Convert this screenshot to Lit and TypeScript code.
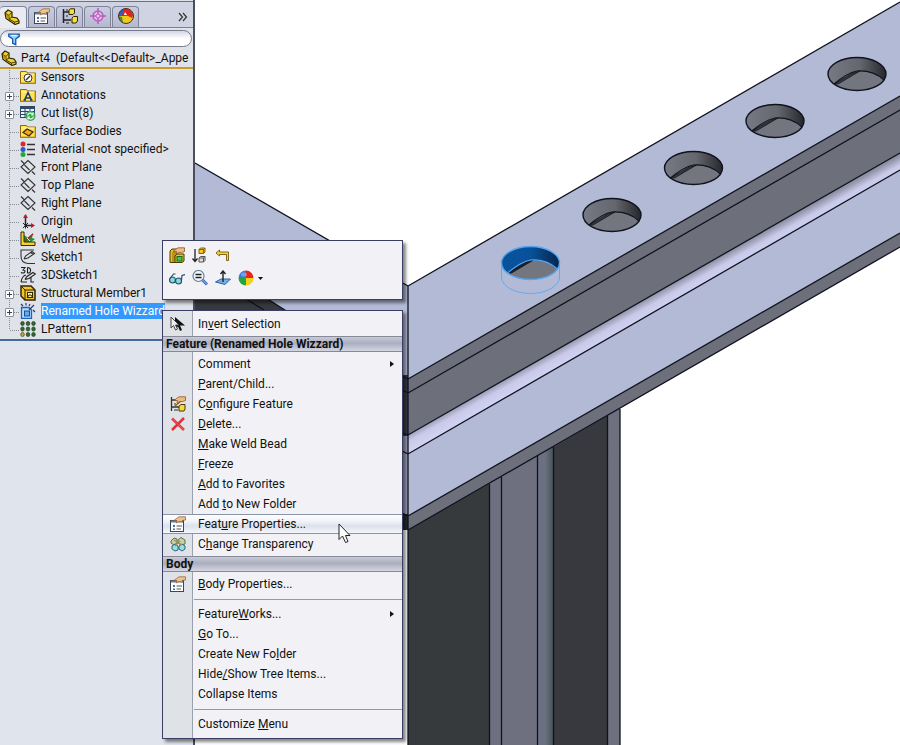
import { LitElement, html, svg, css, nothing } from "lit";
import { customElement, property } from "lit/decorators.js";
import { classMap } from "lit/directives/class-map.js";

const part = svg`<path d="M1 4 4 1 8 3V8L13 9 15 12V14L11 15.500 2 9.500Z" fill="#f0d32c" stroke="#2d2505" stroke-width="1.200"/><path d="M1 4 5 6.500V10L10.500 13 15 12M5 6.500 8 3M10.500 13V15M5 10 8 8" fill="none" stroke="#4a3d08"/><path d="M2 5 4.500 6.500V10L2 8.500Z" fill="#b89310"/>`;
const card = svg`<rect x=".5" y="4.500" width="13" height="11" fill="#fff" stroke="#3d4658"/><path d="M1 5.500h12" stroke="#6b7d9c" stroke-width="2"/><path d="M3 9h2v2H3zM3 12.500h2v1.500H3z" fill="#3f6fb4"/><path d="M6.500 10H12M6.500 13H11" stroke="#555"/><path d="M4 4.500 6.500 2.500 9 .8H15.500V4L12 4.500 13 6 9 5.500 6 7 7 4.500Z" fill="#eec48c" stroke="#8a5f2e" stroke-width=".7"/>`;
const hand = svg`<path d="M4 4.500 6.500 2.500 9 .8H15.500V4.500L12.500 5.500 10 5.500 7 7 7.500 4.500Z" fill="#eebd84" stroke="#8a5426" stroke-width=".8"/>`;
const folder = svg`<path d="M.5 2.500H6L8 4H15.500V14.500H.5Z" fill="#ffe353" stroke="#8b6a0c"/><path d="M1.500 5H14.500" stroke="#fff7b5"/><path d="M15 5V14H1" fill="none" stroke="#c49a18"/>`;
const ball = svg`<path d="M8 8V.5A7.500 7.500 0 0 0 .5 8Z" fill="#3978e0"/><path d="M8 8V.5A7.500 7.500 0 0 1 15.500 8Z" fill="#e0281e"/><path d="M8 8H.5A7.500 7.500 0 0 0 8 15.500Z" fill="#26a53a"/><path d="M8 8H15.500A7.500 7.500 0 0 1 8 15.500Z" fill="#f7cf1d"/><ellipse cx="6" cy="4.500" rx="3" ry="2" fill="#fff" opacity=".3"/>`;

const ICONS: Record<string, unknown> = {
  part,
  card,
  config: svg`<path d="M1.500 1V15M1.500 4H8M1.500 12H9" fill="none" stroke="#222" stroke-width="1.500"/><path d="M4 2H6M4 8H6M4 15H7" stroke="#222"/><path d="M7 2 8.500 .8H12.500V5L11 6.500H7Z" fill="#f7df35" stroke="#2b2708"/><path d="M10 10 11.500 8.500H15.500V13L14 15H10Z" fill="#f7df35" stroke="#2b2708"/>`,
  target: svg`<circle cx="8" cy="8" r="5" fill="#e7b9e8" stroke="#b95fbe" stroke-width="1.500"/><path d="M8 0V16M0 8H16" stroke="#b95fbe" stroke-width="1.500"/><circle cx="8" cy="8" r="2" fill="#efc9ef" stroke="#b95fbe"/>`,
  render: svg`<circle cx="8" cy="8" r="7.500" fill="#f4ca18"/><path d="M8 8 .5 8A7.500 7.500 0 0 1 8 .5Z" fill="#2a62c8"/><path d="M4 7 6 1A7.500 7.500 0 0 1 15 7L14 10 10 8Z" fill="#e3241b"/><path d="M.5 8 4 9 5 14.500A7.500 7.500 0 0 1 .5 8Z" fill="#2a9e38"/><path d="M6 7 7 4 9 7Z" fill="#fff"/><circle cx="8" cy="8" r="7.500" fill="none" stroke="#442b2b"/>`,
  funnel: svg`<path d="M2 2.500H14V5L10 8V14.500L6.500 13V8L2 5Z" fill="#8ed4fa" stroke="#1557b0" stroke-width="1.500"/><path d="M5 4H11" stroke="#e5f8ff" stroke-width="1.500"/>`,
  sensors: svg`${folder}<circle cx="8" cy="9" r="4" fill="#fff" stroke="#333"/><path d="M6 11 10 7" stroke="#333" stroke-width="1.500"/>`,
  annotations: svg`${folder}<path d="M4.500 13 8 5.500 11.500 13M6 11H10.500M3.500 13H6M10 13H12.500" fill="none" stroke="#16366f" stroke-width="1.500"/>`,
  cutlist: svg`<rect x=".5" y="1.500" width="14" height="11" fill="#e9f2fb" stroke="#31465e"/><path d="M.5 3H14.500" stroke="#2a4d78" stroke-width="2"/><path d="M1 6.500H14M1 9.500H10M5 2V12M10 2V12" stroke="#31465e"/><circle cx="10.500" cy="11" r="5" fill="#35a852"/><path d="M7.500 10.500A3 3 0 0 1 13 9.500M13.500 11.500A3 3 0 0 1 8 12.500M13 7.500V10H11M8 14.500V12H10" fill="none" stroke="#eaffea" stroke-width="1.200"/>`,
  surface: svg`${folder}<path d="M3 9.500 7 6 13 9 9 13Z" fill="#f2a71e" stroke="#3b2b05" stroke-width="1.200"/>`,
  material: svg`<circle cx="3" cy="3" r="2.500" fill="#d92b24"/><circle cx="3" cy="8.500" r="2.500" fill="#2859d6"/><circle cx="3" cy="13.500" r="2.500" fill="#25a934"/><path d="M7 3.500H15M7 8.500H15M7 13.500H15" stroke="#333" stroke-width="1.500"/>`,
  plane: svg`<path d="M8 1.500 15 8 8 14.500 1 8ZM1 1.500 4 4.500M4.500 6 9.500 11M12 12.500 15 15.500" fill="none" stroke="#333" stroke-width="1.100"/>`,
  origin: svg`<path d="M5.500 2V12.500H13" fill="none" stroke="#4b1518" stroke-width="1.500"/><path d="M3 5 5.500 1 8 5ZM11 10 15 12.500 11 15Z" fill="#b22028"/><path d="M3 10 8 15M8 10 3 15M5.500 9V15.500" stroke="#222"/>`,
  weldment: svg`<path d="M4 11V4L8 7 13 2 12 7 15 8 11 11Z" fill="#218f3d"/><path d="M1 1H4V11H15V14.500H1Z" fill="#f2d22e" stroke="#332b08"/><path d="M5 10 13 3" stroke="#b3261e" stroke-width="1.500"/><path d="M7 7 10 10" stroke="#dff2b9"/>`,
  sketch: svg`<path d="M14 1H1V7Q1 14 8 14.500H15M4 10 5.500 7 12 2.500 14.500 4.500 8 9 4 10M11 3.500 13 5.500" fill="none" stroke="#333" stroke-width="1.100"/>`,
  sketch3d: svg`<path d="M1 .5H5L3 3Q6 3.500 4.500 5.500 3 6.500 1 5.500M7.500 .5V6H8.500Q11 5.500 10.500 2.500 10 .5 7.500 .5M1 15Q2 9 6 8M5 12.500 7 9.500 13 5.500 15.500 7 9 11.500 5 12.500M1 15H7M11 10V15H14" fill="none" stroke="#222" stroke-width="1.100"/>`,
  member: svg`<path d="M1 1H11L15 5V15H5L1 11Z" fill="#f2c62a" stroke="#302608" stroke-width="1.500"/><path d="M1 1 5 5H15M5 5V15" fill="none" stroke="#302608"/><rect x="7.500" y="7.500" width="5" height="5" fill="#fff3aa" stroke="#302608"/><path d="M7 13 9 10H11L13 13" fill="none" stroke="#302608"/>`,
  hole: svg`<path d="M1.500 4.500H9L11.500 7V15.500H1.500Z" fill="#b7dcfa" stroke="#1d63bb" stroke-width="1.300"/><rect x="4.500" y="8" width="5" height="5" fill="#67a9ee" stroke="#164c98"/><path d="M9 7 14 2M1 1 3 3M6 0V2.500M9 3 10 1M13 7 15 9" stroke="#203d79" stroke-width="1.200"/>`,
  pattern: svg`${[2.5, 8, 13.500].map((x) => [2.500, 8, 13.500].map((y) => svg`<ellipse cx=${x} cy=${y} rx="1.800" ry="2.100" fill=${x < 3 && y > 13 ? "#e59b22" : "#2f6b30"} stroke="#15300f" stroke-width=".6"/>`))}`,
  edit: svg`<path d="M1 4 3 2H8V15.500H1Z" fill="#edbd20" stroke="#4d3905"/><path d="M4 5V15M6 5V15" stroke="#87680a"/><path d="M6 9 8 7H15V14L13 15.500H6Z" fill="#e6c425" stroke="#4d3905"/><rect x="8" y="9.500" width="5" height="4.500" fill="#45c651" stroke="#146724"/>${hand}`,
  suppress: svg`<path d="M3 2V14M.5 11.500 3 14.500 5.500 11.500" fill="none" stroke="#222" stroke-width="1.300"/><path d="M7 2.500 8.500 1H13V5L11.500 6.500H7ZM7 2.500H11.500V6.500M11.500 2.500 13 1" fill="#f4c72f" stroke="#8a5c0c"/><path d="M7 11 8.500 9.500H13V13.500L11.500 15H7ZM7 11H11.500V15M11.500 11 13 9.500" fill="#ddd" stroke="#555"/>`,
  rollback: svg`<path d="M1 6 4.500 3V5H13.500V13.500H11.500V7.500H4.500V9Z" fill="#f7d637" stroke="#76590b" stroke-width=".9"/>`,
  glasses: svg`<circle cx="3.500" cy="10" r="3" fill="#8bd5e7" stroke="#235463" stroke-width="1.200"/><circle cx="9.500" cy="11" r="3" fill="#8bd5e7" stroke="#235463" stroke-width="1.200"/><path d="M1 8.500 4.500 4H6.500M12.500 10 13 5.500 16 4.500M6 9.500H7" fill="none" stroke="#235463" stroke-width="1.200"/>`,
  zoom: svg`<circle cx="6.500" cy="6" r="5.500" fill="#f2f6fb" stroke="#6a7f9b" stroke-width="1.200"/><path d="M3.500 4.500H9.500M3.500 7.500H9.500" stroke="#222" stroke-width="1.500"/><path d="M10.500 10 15 14.500" stroke="#3568bd" stroke-width="3"/><path d="M10.500 10 15 14.500" stroke="#9fc6f2"/>`,
  normal: svg`<path d="M.5 12 6 9H15.500L10 14.500Z" fill="#77aee6" stroke="#2764a8"/><path d="M8 12V1M5.500 4 8 1 10.500 4" fill="none" stroke="#222" stroke-width="1.400"/>`,
  ball,
  pointer: svg`<path d="M5 1V13L8 10.500 10 15 12 14 10 9.500H15Z" fill="#111"/><path d="M1 1V12L3.500 9.500 5.500 14 7.500 13 5.500 9H9Z" fill="#eee" stroke="#444"/>`,
  configure: svg`<path d="M1.500 1V15M1.500 4H6M1.500 11H9" fill="none" stroke="#333" stroke-width="1.300"/><path d="M4 14H8M4 8H6" stroke="#333"/><path d="M9 10 11 8.500H15V13L14 15H9Z" fill="#f4dc38" stroke="#4d3905"/><path d="M5 10 11 5" stroke="#9e5a1c" stroke-width="1.500"/>${hand}`,
  remove: svg`<path d="M2 2.500 14 14M14 2 2 14" stroke="#e0313b" stroke-width="2.500"/><path d="M2 2.500 14 14" stroke="#f0676a" stroke-width=".7"/>`,
  transparency: svg`<path d="M1 5 4 2 7 3V7L4 9 1 7ZM8 4 11 1.500 15 4V8L11 9 8 7Z" fill="#c3d3a0" stroke="#64704c"/><path d="M2 10 5 8 8 10V14L5 15 2 13ZM9 10 12 8 15 10V13L12 15 9 13Z" fill="#99dfe8" stroke="#2b6775"/><path d="M4 4 12 9M10 5 5 10" stroke="#a98a5b" stroke-width="1.300"/>`,
};

function icon(name: string) {
  return html`<svg class="icon" viewBox="0 0 16 16" aria-hidden="true">${ICONS[name]}</svg>`;
}

const iconStyles = css`
  .icon { display: block; flex: none; width: 16px; height: 16px; }
`;

@customElement("feature-tree")
class FeatureTree extends LitElement {
  static styles = [iconStyles, css`
    :host { display: block; }
    .bar { display: flex; align-items: flex-end; gap: 1px; height: 24px; padding-top: 3px; background: linear-gradient(#dde0e8 0 1px, #6d7083 1px 2px, #d0d4e2 2px); border-bottom: 1px solid #7c8095; }
    .tab { display: flex; align-items: center; justify-content: center; width: 27px; height: 21px; padding: 0 0 2px; border: 1px solid #80849a; border-bottom: 0; border-radius: 4px 4px 0 0; background: linear-gradient(#c9cde0, #b5b9cf); }
    .active { height: 22px; margin-bottom: -1px; padding-right: 3px; border-left: 0; background: #e9ebf1; }
    .more { margin-left: auto; height: 20px; padding: 0 5px; border: 0; background: none; color: #333; }
    .chevrons { display: block; width: 10px; height: 10px; }
    .filter { display: flex; align-items: center; gap: 4px; height: 15px; margin: 2px 1px 2px 0; padding: 0 6px; border: 1px solid #777b8c; border-radius: 9px; background: linear-gradient(#d4d7e6, #fff 50%); }
    .filter .icon { width: 14px; height: 14px; }
    .query { flex: 1; min-width: 0; height: 15px; padding: 0; border: 0; outline: 0; background: none; font: inherit; }
    .root { display: flex; align-items: center; gap: 4px; height: 18px; white-space: pre; border-bottom: 2px solid #c99c2d; padding-left: 1px; }
    .tree { margin: -1px 0 0; padding: 0 0 1px; list-style: none; }
    .row { display: flex; align-items: center; height: 18px; background: repeating-linear-gradient(#85899a 0 1px, transparent 1px 2px) 9px 0 / 1px 100% no-repeat, repeating-linear-gradient(90deg, #85899a 0 1px, transparent 1px 2px) 10px 10px / 9px 1px no-repeat; }
    .row:last-child { background-size: 1px 50%, 9px 1px; }
    .twist { width: 20px; flex: none; }
    .expand { display: block; width: 9px; height: 9px; margin: 2px 0 0 5px; padding: 0; border: 1px solid #8b8f9c; border-radius: 1px; background: linear-gradient(#34415e, #34415e) center / 5px 1px no-repeat, linear-gradient(#34415e, #34415e) center / 1px 5px no-repeat, #fff; }
    .label { margin-left: 5px; line-height: 16px; white-space: nowrap; }
    .selected { background: #3399ff; color: #fff; }
  `];

  private rows: [string, string, boolean?, boolean?][] = [
    ["sensors", "Sensors"],
    ["annotations", "Annotations", true],
    ["cutlist", "Cut list(8)", true],
    ["surface", "Surface Bodies"],
    ["material", "Material <not specified>"],
    ["plane", "Front Plane"],
    ["plane", "Top Plane"],
    ["plane", "Right Plane"],
    ["origin", "Origin"],
    ["weldment", "Weldment"],
    ["sketch", "Sketch1"],
    ["sketch3d", "3DSketch1"],
    ["member", "Structural Member1", true],
    ["hole", "Renamed Hole Wizzard", true, true],
    ["pattern", "LPattern1"],
  ];

  render() {
    const tabs = [["part", "Feature tree"], ["card", "Properties"], ["config", "Configurations"], ["target", "Dimensions"], ["render", "Display"]];
    return html`
      <nav class="bar">
        ${tabs.map(([name, label], i) => html`<button class=${classMap({ tab: true, active: i === 0 })} aria-label=${label}>${icon(name)}</button>`)}
        <button class="more" aria-label="More tabs"><svg class="chevrons" viewBox="0 0 10 10"><path d="M1 1 4.500 5 1 9M5 1 8.500 5 5 9" fill="none" stroke="#333" stroke-width="1.200"/></svg></button>
      </nav>
      <label class="filter">${icon("funnel")}<input class="query" type="text" aria-label="Filter" /></label>
      <div class="root">${icon("part")}<span>Part4  (Default&lt;&lt;Default&gt;_Appe</span></div>
      <ul class="tree">
        ${this.rows.map(([name, label, expandable, selected]) => html`
          <li class="row">
            <span class="twist">${expandable ? html`<button class="expand" aria-label="Expand ${label}"></button>` : nothing}</span>
            ${icon(name)}<span class=${classMap({ label: true, selected: !!selected })}>${label}</span>
          </li>`)}
      </ul>`;
  }
}

type Entry = { kind: "item" | "head" | "rule"; text?: string; icon?: string; sub?: boolean; hot?: boolean };

const item = (text: string, iconName?: string, extra: Partial<Entry> = {}): Entry => ({ kind: "item", text, icon: iconName, ...extra });

/* An underscore stands before the access key of each label. */
const MENU: Entry[] = [
  item("In_vert Selection", "pointer"),
  { kind: "head", text: "Feature (Renamed Hole Wizzard)" },
  item("Comment", undefined, { sub: true }),
  item("_Parent/Child..."),
  item("C_onfigure Feature", "configure"),
  item("_Delete...", "remove"),
  item("_Make Weld Bead"),
  item("_Freeze"),
  item("_Add to Favorites"),
  item("Add _to New Folder"),
  item("Feat_ure Properties...", "card", { hot: true }),
  item("C_hange Transparency", "transparency"),
  { kind: "head", text: "Body" },
  item("_Body Properties...", "card"),
  { kind: "rule" },
  item("Feature_Works...", undefined, { sub: true }),
  item("_Go To..."),
  item("Create New Fo_lder"),
  item("Hide_/Show Tree Items..."),
  item("Collapse Items"),
  { kind: "rule" },
  item("Customize _Menu"),
];

@customElement("context-menu")
class ContextMenu extends LitElement {
  static styles = [iconStyles, css`
    :host { display: block; box-sizing: border-box; width: 241px; padding: 3px 0 4px; border: 1px solid #3b3d62; background: linear-gradient(90deg, #dfe3e7 0 29px, #9ba1ac 29px 30px, #f1f1f6 30px); box-shadow: 3px 3px 3px #0007; }
    .item { display: flex; align-items: center; width: 100%; height: 20px; padding: 0 8px 0 7px; border: 0; background: none; font: inherit; color: #111; text-align: left; }
    .hot { background: linear-gradient(#8c94aa 0 1px, transparent 1px 19px, #8c94aa 19px), linear-gradient(#fff, #f2f4fa 35%, #dce1ec 60%, #f8f9fc); }
    .slot { width: 16px; flex: none; }
    .text { flex: 1; margin-left: 12px; white-space: nowrap; }
    .key { text-decoration: underline; }
    .arrow { width: 4px; height: 6px; }
    .head { box-sizing: border-box; height: 16px; margin: 2px 0; padding-left: 3px; border: solid #858998; border-width: 1px 0; background: linear-gradient(#c9cbd6, #aaaebf 45%, #d4d6e0); font-weight: 700; line-height: 14px; white-space: nowrap; }
    .rule { height: 1px; margin: 5px 0 4px 31px; border: 0; background: #9499a7; }
  `];

  private entry(e: Entry) {
    if (e.kind === "head") return html`<div class="head">${e.text}</div>`;
    if (e.kind === "rule") return html`<hr class="rule" />`;
    const [before, after] = e.text!.split("_");
    const label = after === undefined ? before : html`${before}<span class="key">${after[0]}</span>${after.slice(1)}`;
    return html`<button role="menuitem" class=${classMap({ item: true, hot: !!e.hot })}><span class="slot">${e.icon ? icon(e.icon) : nothing}</span><span class="text">${label}</span>${e.sub ? html`<svg class="arrow" viewBox="0 0 4 6"><path d="M0 0 4 3 0 6Z" fill="#111"/></svg>` : nothing}</button>`;
  }

  render() {
    return html`<div role="menu">${MENU.map((e) => this.entry(e))}</div>`;
  }
}

@customElement("quick-bar")
class QuickBar extends LitElement {
  static styles = [iconStyles, css`
    :host { display: flex; flex-direction: column; gap: 3px; box-sizing: border-box; width: 241px; height: 60px; padding: 4px; border: 1px solid #3b3d62; background: #f1f1f6; box-shadow: 3px 3px 3px #0007; }
    .line { display: flex; gap: 3px; }
    .tool { display: flex; align-items: center; justify-content: center; min-width: 20px; height: 20px; padding: 0 2px; border: 0; background: none; }
    .drop { display: block; width: 5px; height: 3px; margin-left: 4px; }
  `];

  render() {
    const lines = [
      [["edit", "Edit feature"], ["suppress", "Suppress"], ["rollback", "Rollback"]],
      [["glasses", "Hide"], ["zoom", "Zoom to selection"], ["normal", "Normal to"], ["ball", "Appearance"]],
    ];
    return lines.map((line) => html`<div class="line">${line.map(([name, label]) => html`
      <button class="tool" aria-label=${label}>${icon(name)}${name === "ball" ? html`<svg class="drop" viewBox="0 0 5 3"><path d="M0 0H5L2.500 3Z" fill="#111"/></svg>` : nothing}</button>`)}</div>`);
  }
}

@customElement("model-view")
class ModelView extends LitElement {
  static styles = css`
    :host { display: block; overflow: hidden; background: #fff; }
    .scene { display: block; width: 100%; height: 100%; }
    .edge { fill: none; stroke: #10131f; stroke-width: 1.300; }
  `;

  private hole(x: number, y: number, picked = false) {
    const rim = picked ? "#55a5ef" : "#10131f";
    return svg`<g transform="translate(${x} ${y})">
      <ellipse rx="29" ry="16.500" fill=${picked ? "url(#bluewall)" : "url(#wall)"}/>
      <path d="M-23 10 0 -3Q16 -4 27 6 20 16.500 0 16.500 -15 16.500 -23 10Z" fill="#74767f"/>
      <path d="M-23 10 -4 -1 3 -3 -19 10Z" fill=${picked ? "#1b1e28" : "#363942"} stroke="#14161d" stroke-width=".8"/>
      <path d="M-23 10Q-10 -1 0 -3 16 -4 27 6" fill="none" stroke=${rim} stroke-width="1.200"/>
      <ellipse rx="29" ry="16.500" fill="none" stroke=${rim} stroke-width="1.400"/>
      ${picked ? svg`<path d="M-29 0V14A29 16.500 0 0 0 29 14V0" fill="none" stroke="#64aaf0"/>` : nothing}
    </g>`;
  }

  render() {
    return html`<svg class="scene" viewBox="195 0 705 745" preserveAspectRatio="xMinYMin slice" role="img" aria-label="Welded frame with a row of holes">
      <defs>
        <linearGradient id="wall"><stop offset="0" stop-color="#777984"/><stop offset=".55" stop-color="#65676e"/><stop offset="1" stop-color="#25272c"/></linearGradient>
        <linearGradient id="bluewall"><stop offset="0" stop-color="#08539d"/><stop offset=".5" stop-color="#08519a"/><stop offset="1" stop-color="#05254b"/></linearGradient>
        <linearGradient id="round" gradientUnits="userSpaceOnUse" x1="654" y1="294" x2="663" y2="310"><stop offset="0" stop-color="#8f91a6"/><stop offset=".45" stop-color="#c9cae9"/><stop offset="1" stop-color="#d3d4f3"/></linearGradient>
        <linearGradient id="flute"><stop offset="0" stop-color="#6e7084"/><stop offset=".45" stop-color="#69717e"/><stop offset="1" stop-color="#465057"/></linearGradient>
      </defs>
      <path d="M195 163 408 286V530L195 400Z" fill="#b3bad6"/>
      <path d="M195 270 266 298 288 312V400H195Z" fill="#36393d"/>
      <path d="M195 163 408 286M246 299 264 310M266 298 288 312" class="edge"/>
      <path d="M402 375H408V440H402Z" fill="#383a45"/><path d="M402 436H408V515H402Z" fill="#9ea1bd"/><path d="M402 514H408V530H402Z" fill="#272a31"/>
      <path d="M402 376 408 379M402 390 408 393M402 433 408 435M402 451 408 454M402 513 408 516" class="edge"/>
      <path d="M408 516 620 400V745H408Z" fill="#6e7080"/>
      <path d="M408 530 489 484V745H408Z" fill="#373a3d"/>
      <path d="M538 440H554V745H538Z" fill="url(#flute)"/>
      <path d="M554 447 607 416V745H554Z" fill="#37393e"/>
      <path d="M408 286 900 2V96L408 379Z" fill="#b3bad6"/>
      <path d="M408 379 900 96V153L408 435Z" fill="#6d6f7b"/>
      <path d="M408 435 900 153V170L408 454Z" fill="url(#round)"/>
      <path d="M408 454 900 170V233L408 516Z" fill="#b3bad6"/>
      <path d="M408 516 900 233V247L408 530Z" fill="#6d6f7b"/>
      <path class="edge" d="M408 286 900 2M408 379 900 96M408 393 900 110M408 435 900 153M408 454 900 170M408 516 900 233M408 530 900 247M408 286V745M489.500 484V745M501.500 477V745M537.500 456V745M553.500 447V745M607.500 416V745M620 409V745"/>
      ${this.hole(857, 74)}${this.hole(775, 121)}${this.hole(693.500, 168)}${this.hole(612, 215)}${this.hole(530.500, 263, true)}
    </svg>`;
  }
}

@customElement("app-root")
class AppRoot extends LitElement {
  @property() panelLabel = "Feature manager";

  static styles = css`
    :host { position: relative; display: grid; grid-template-columns: 195px minmax(0, 1fr); height: 100vh; overflow: hidden; font: 12px/16px Roboto, sans-serif; color: #111; }
    .side { min-width: 0; overflow: hidden; border-right: 2px solid #4b4e5c; background: #e0e4ec; }
    .panel { background: #dfe2e9; border-bottom: 2px solid #45699d; }
    .quick, .menu { position: absolute; left: 162px; }
    .quick { top: 240px; }
    .menu { top: 310px; }
    .cursor { position: absolute; left: 338px; top: 523px; width: 13px; height: 21px; }
  `;

  render() {
    return html`
      <aside class="side" aria-label=${this.panelLabel}><feature-tree class="panel"></feature-tree></aside>
      <model-view></model-view>
      <quick-bar class="quick"></quick-bar>
      <context-menu class="menu"></context-menu>
      <svg class="cursor" viewBox="0 0 13 21" aria-hidden="true"><path d="M1 1V16.500L4.500 13 7.500 19.500 10 18.500 7.500 12.500H12Z" fill="#fff" stroke="#222"/></svg>`;
  }
}
